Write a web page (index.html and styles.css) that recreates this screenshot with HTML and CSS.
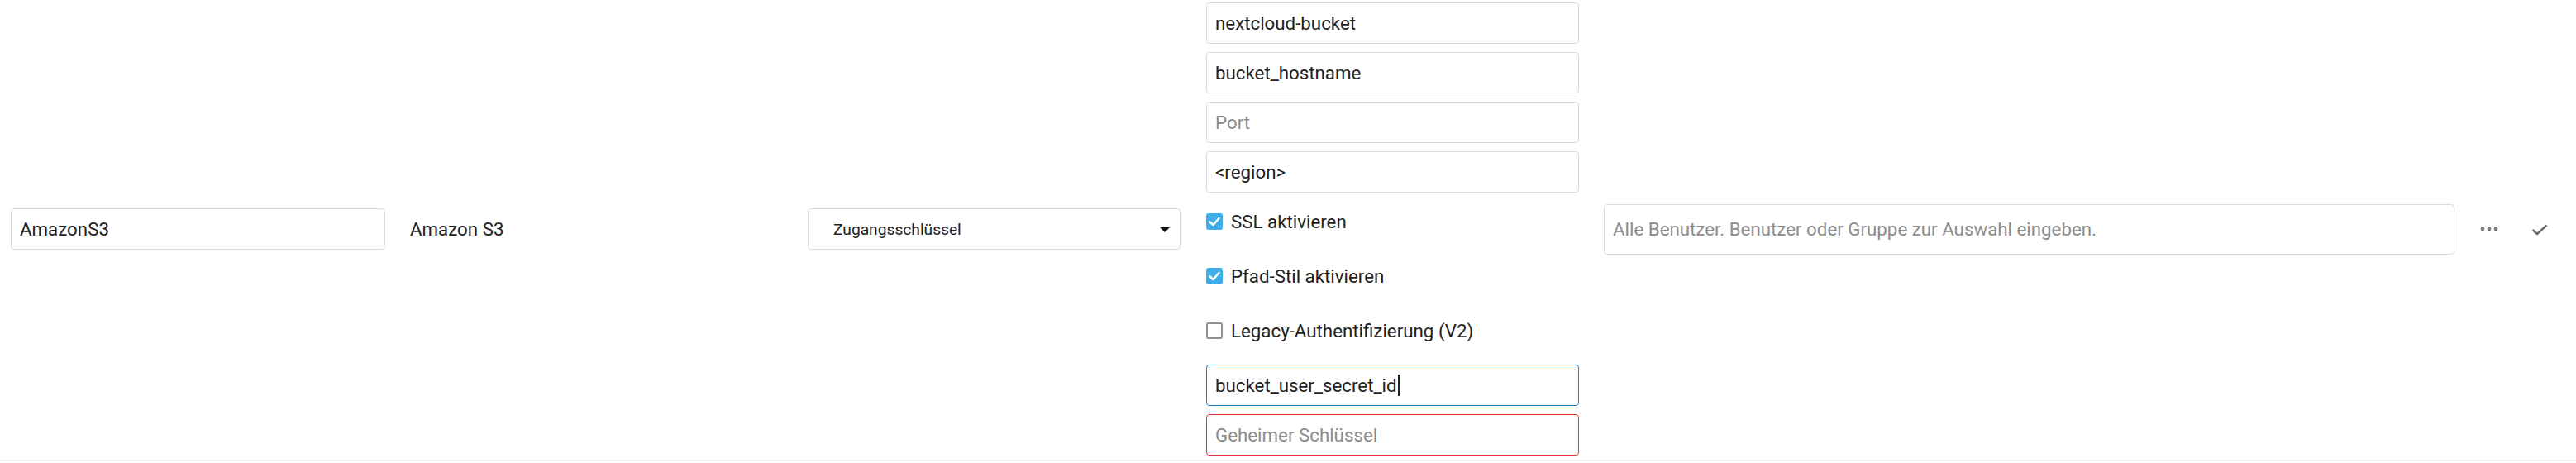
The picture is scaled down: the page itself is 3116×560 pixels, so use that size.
FILE: index.html
```html
<!DOCTYPE html>
<html lang="de">
<head>
<meta charset="utf-8">
<title>Externer Speicher</title>
<link rel="stylesheet" href="styles.css">
</head>
<body>
<div class="row">
  <div class="cell c-name"><div class="field">AmazonS3</div></div>
  <div class="cell c-backend">Amazon S3</div>
  <div class="cell c-auth">
    <div class="select"><span class="select-text">Zugangsschlüssel</span><span class="caret"></span></div>
  </div>
  <div class="cell c-config">
    <div class="field stack-field">nextcloud-bucket</div>
    <div class="field stack-field">bucket_hostname</div>
    <div class="field stack-field placeholder">Port</div>
    <div class="field stack-field group-end">&lt;region&gt;</div>
    <div class="check-row first"><span class="box checked"><svg viewBox="0 0 20 20" width="20" height="20"><polyline points="4.5,10.5 8.5,14 15.5,6" fill="none" stroke="#fff" stroke-width="2.6" stroke-linecap="round" stroke-linejoin="round"/></svg></span><span class="label">SSL aktivieren</span></div>
    <div class="check-row"><span class="box checked"><svg viewBox="0 0 20 20" width="20" height="20"><polyline points="4.5,10.5 8.5,14 15.5,6" fill="none" stroke="#fff" stroke-width="2.6" stroke-linecap="round" stroke-linejoin="round"/></svg></span><span class="label">Pfad-Stil aktivieren</span></div>
    <div class="check-row last"><span class="box"></span><span class="label">Legacy-Authentifizierung (V2)</span></div>
    <div class="field stack-field focused">bucket_user_secret_id<span class="text-caret"></span></div>
    <div class="field stack-field placeholder invalid">Geheimer Schlüssel</div>
  </div>
  <div class="cell c-applicable">
    <div class="multiselect">Alle Benutzer. Benutzer oder Gruppe zur Auswahl eingeben.</div>
  </div>
  <div class="cell c-actions">
    <span class="icon-more"><svg viewBox="0 0 22 6" width="22" height="6"><circle cx="3" cy="3" r="2.4" fill="#7a7a7a"/><circle cx="11" cy="3" r="2.4" fill="#7a7a7a"/><circle cx="19" cy="3" r="2.4" fill="#7a7a7a"/></svg></span>
    <span class="icon-check"><svg viewBox="0 0 20 14" width="20" height="14"><polyline points="1.5,7 7,12 18.5,1.5" fill="none" stroke="#6a6a6a" stroke-width="2.6" stroke-linejoin="miter"/></svg></span>
  </div>
</div>
</body>
</html>
```

FILE: styles.css
```css
html, body {
  margin: 0;
  padding: 0;
  background: #fff;
}
body {
  font-family: Roboto, "Liberation Sans", sans-serif;
  font-size: 22.3px;
  color: #222;
}
.row {
  display: flex;
  align-items: center;
  padding: 3px 0 5px 0;
  border-bottom: 1px solid #ececec;
  width: 3116px;
  box-sizing: border-box;
}
.cell {
  flex: none;
}
.c-name {
  margin-left: 13px;
  width: 453px;
}
.c-backend {
  margin-left: 30px;
  width: 451px;
  line-height: 26px;
}
.c-auth {
  margin-left: 30px;
  width: 451px;
}
.c-config {
  margin-left: 31px;
  width: 451px;
  display: flex;
  flex-direction: column;
}
.c-applicable {
  margin-left: 30px;
  width: 1029px;
}
.c-actions {
  margin-left: 31px;
  display: flex;
  align-items: center;
}
.field {
  box-sizing: border-box;
  height: 50px;
  border: 1px solid #dbdbdb;
  border-radius: 4px;
  padding: 0 10px;
  display: flex;
  align-items: center;
  background: #fff;
  white-space: nowrap;
}
.stack-field {
  margin-bottom: 10px;
}
.stack-field.group-end,
.stack-field:last-child {
  margin-bottom: 0;
}
.placeholder {
  color: #8c8c8c;
}
.focused {
  border-color: #1a7fc4;
}
.invalid {
  border-color: #e9322d;
}
.text-caret {
  display: inline-block;
  width: 2px;
  height: 26px;
  background: #222;
  margin-left: 1px;
}
.select {
  box-sizing: border-box;
  height: 50px;
  border: 1px solid #dbdbdb;
  border-radius: 4px;
  padding: 0 12px 0 30px;
  display: flex;
  align-items: center;
  justify-content: space-between;
  font-size: 19.2px;
}
.caret {
  width: 0;
  height: 0;
  border-left: 6px solid transparent;
  border-right: 6px solid transparent;
  border-top: 6px solid #111;
  margin-top: 2px;
}
.check-row {
  height: 66px;
  display: flex;
  align-items: center;
}
.check-row.first {
  margin-top: 2px;
}
.check-row.last {
  margin-bottom: 8px;
}
.box {
  flex: none;
  box-sizing: border-box;
  width: 20px;
  height: 20px;
  border-radius: 3px;
  border: 2px solid #8e8e98;
  background: #fff;
  margin-right: 10px;
  display: flex;
}
.box svg {
  display: block;
}
.box.checked {
  border: none;
  background: #3daee9;
}
.label {
  line-height: 26px;
}
.multiselect {
  box-sizing: border-box;
  height: 61px;
  border: 1px solid #dbdbdb;
  border-radius: 4px;
  padding: 0 10px;
  display: flex;
  align-items: center;
  color: #8c8c8c;
}
.icon-more {
  display: flex;
  width: 22px;
}
.icon-check {
  display: flex;
  margin-left: 40px;
  margin-top: 1px;
}
```
